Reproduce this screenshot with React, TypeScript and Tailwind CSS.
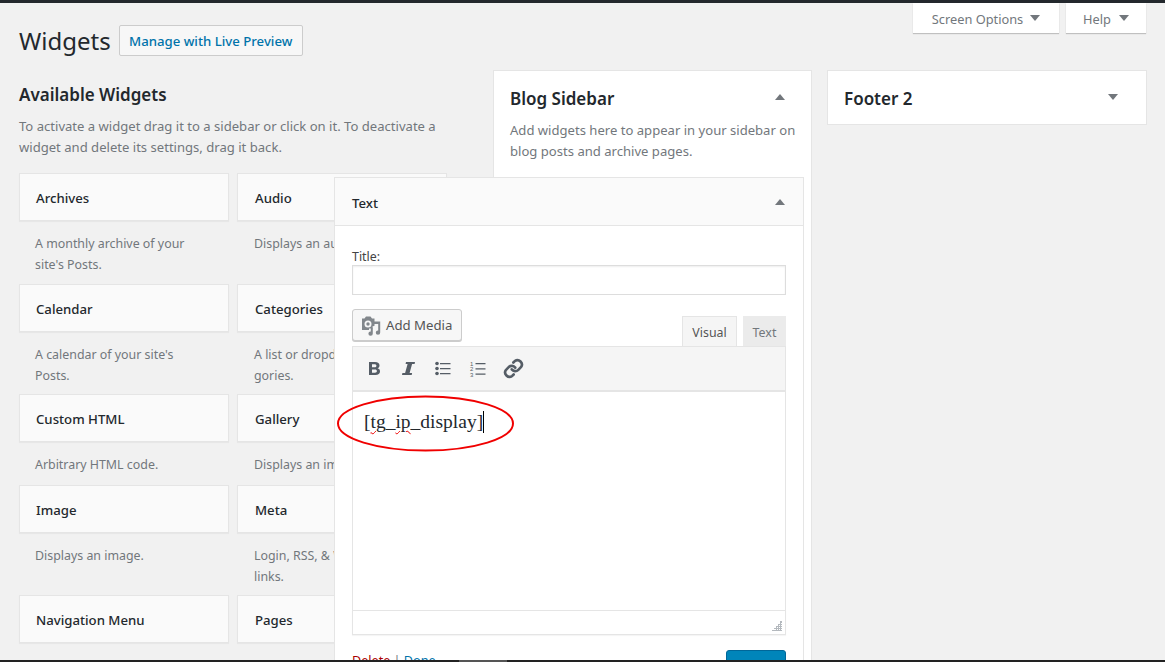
const font = "font-['Noto_Sans',sans-serif]";

const widgets = [
  { name: "Archives", desc: "A monthly archive of your site's Posts.", h: "h-[111px]" },
  { name: "Audio", desc: "Displays an audio player.", h: "h-[111px]" },
  { name: "Calendar", desc: "A calendar of your site's Posts.", h: "h-[110px]" },
  { name: "Categories", desc: "A list or dropdown of cate-gories.", h: "h-[110px]" },
  { name: "Custom HTML", desc: "Arbitrary HTML code.", h: "h-[91px]" },
  { name: "Gallery", desc: "Displays an image gallery.", h: "h-[91px]" },
  { name: "Image", desc: "Displays an image.", h: "h-[110px]" },
  { name: "Meta", desc: "Login, RSS, & WordPress.org links.", h: "h-[110px]" },
  { name: "Navigation Menu", desc: "", h: "h-[66px]" },
  { name: "Pages", desc: "", h: "h-[66px]" },
];

function Arrow({ up, className }: { up?: boolean; className?: string }) {
  return (
    <svg width="10" height="6" viewBox="0 0 10 6" className={`shrink-0 ${className ?? ""}`}>
      <path d={up ? "M0 6 L5 0 L10 6 Z" : "M0 0 L10 0 L5 6 Z"} fill="#72777c" />
    </svg>
  );
}

function WidgetCard({ name, desc, h }: { name: string; desc: string; h: string }) {
  return (
    <div className={`group ${h}`}>
      <div className="h-[48px] flex items-center pl-[16px] group-even:pl-[17px] pt-[4px] bg-[#fafafa] border border-[#e5e5e5] shadow-[0_1px_1px_rgba(0,0,0,0.04)] text-[13.2px] font-medium text-[#23282d]">
        {name}
      </div>
      <p className="mt-[12px] pl-[16px] group-even:pl-[17px] max-w-[182px] group-even:max-w-[184px] text-[12.4px] leading-[21px] text-[#72777c]">{desc}</p>
    </div>
  );
}

function MediaIcon() {
  return (
    <svg width="20" height="20" viewBox="0 0 20 20" fill="#82878c">
      <path
        fillRule="evenodd"
        d="M1 2.500h2.500L5 .5h4.500l1.500 2h2.500v7.300l-2 .6v2.100H8v1.500H1zM7 4.500a3.500 3.500 0 1 0 0 7 3.500 3.500 0 0 0 0-7z"
      />
      <circle cx="7" cy="8" r="1.700" />
      <path d="M13 5.500h6.200v11a2.200 2.200 0 1 1-2-2.100V8h-4.200z" />
      <path d="M11.800 11.500v6a2.200 2.200 0 1 1-2-2.100v-3.900z" />
    </svg>
  );
}

function Toolbar() {
  return (
    <div className="h-[45px] flex items-center pl-[13px] gap-[17px] bg-[#f5f5f5] border-b-2 border-[#e5e5e5]">
      <svg width="17" height="17" viewBox="0 0 17 17" fill="#555d66">
        <path d="M3 2h6c3 0 4.500 1.300 4.500 3.500 0 1.400-.8 2.400-2 2.800 1.600.4 2.500 1.500 2.500 3.200 0 2.300-1.700 3.500-4.500 3.500H3V2zm3 2.300v3h2.500c1.200 0 1.900-.5 1.900-1.500S9.700 4.300 8.500 4.300H6zm0 5.200v3.200h3c1.200 0 1.900-.6 1.900-1.600S10.200 9.500 9 9.500H6z" />
      </svg>
      <svg width="17" height="17" viewBox="0 0 17 17" fill="#555d66">
        <path d="M6 2h9l-.4 2h-2.500l-2.500 9h2.500l-.4 2H2l.4-2h2.700l2.500-9H5.600z" />
      </svg>
      <svg width="18" height="17" viewBox="0 0 18 17" fill="#555d66">
        <circle cx="3" cy="3.500" r="1.800" />
        <circle cx="3" cy="8.500" r="1.800" />
        <circle cx="3" cy="13.500" r="1.800" />
        <path d="M6 3h10.500v1.200H6zM6 8h10.500v1.200H6zM6 13h10.500v1.200H6z" />
      </svg>
      <svg width="18" height="17" viewBox="0 0 18 17" fill="#555d66">
        <path d="M6.500 3h10v1.200h-10zM6.500 8.300h10v1.200h-10zM6.500 13.500h10v1.200h-10z" />
        <text x="1" y="5.500" fontSize="6" fontFamily="Liberation Sans">1</text>
        <text x="1" y="11" fontSize="6" fontFamily="Liberation Sans">2</text>
        <text x="1" y="16.500" fontSize="6" fontFamily="Liberation Sans">3</text>
      </svg>
      <svg width="21" height="21" viewBox="0 0 24 24" fill="none" stroke="#555d66" strokeWidth="3" strokeLinecap="round" strokeLinejoin="round" className="-ml-[1px]">
        <path d="M10 13a5 5 0 0 0 7.500.5l3-3a5 5 0 0 0-7-7l-1.700 1.700" />
        <path d="M14 11a5 5 0 0 0-7.500-.5l-3 3a5 5 0 0 0 7 7l1.700-1.700" />
      </svg>
    </div>
  );
}

function TextWidgetPopup() {
  return (
    <div className="absolute left-[334px] top-[177px] w-[470px] h-[500px] bg-white border border-[#e5e5e5]">
      <div className="h-[48px] flex items-center justify-between pl-[17px] pr-[18px] pt-[4px] bg-[#fafafa] border-b border-[#e5e5e5] text-[13.2px] font-medium text-[#23282d]">
        Text
        <Arrow up className="mb-[4px]" />
      </div>
      <div className="px-[17px] pt-[22px]">
        <label className="block text-[12.4px] leading-[18px] text-[#444]">Title:</label>
        <div className="-mt-[1px] h-[30px] border border-[#ddd] bg-white shadow-[inset_0_1px_2px_rgba(0,0,0,0.07)]" />
        <div className="mt-[14px] flex items-end justify-between h-[37px]">
          <div className="self-start h-[32px] w-[110px] pt-[1px] flex items-center gap-[5px] pl-[8px] bg-[#f7f7f7] border border-[#ccc] rounded-[3px] shadow-[0_1px_0_#ccc] text-[13.2px] text-[#555]">
            <MediaIcon />
            Add Media
          </div>
          <div className="flex gap-[6px] text-[12.4px] text-[#555]">
            <div className="h-[30px] w-[55px] pt-[3px] flex items-center justify-center bg-[#f5f5f5] border border-b-0 border-[#e5e5e5]">Visual</div>
            <div className="h-[30px] w-[43px] pt-[3px] flex items-center justify-center bg-[#ebebeb] border border-b-0 border-[#ebebeb] text-[#72777c]">Text</div>
          </div>
        </div>
        <div className="h-[264px] border-x border-t border-[#e5e5e5]">
          <Toolbar />
          <div className="pl-[11px] pt-[18px] font-['Liberation_Serif',serif] text-[19.5px] leading-[24px] text-[#23282d]">
            [<span className="underline decoration-wavy decoration-[#e00] decoration-1 underline-offset-2">tg</span>_<span className="underline decoration-wavy decoration-[#e00] decoration-1 underline-offset-2">ip</span>_display]<span className="inline-block w-px h-[22px] align-[-5px] bg-black" />
          </div>
        </div>
        <div className="relative h-[25px] border border-[#e5e5e5] shadow-[0_1px_1px_rgba(0,0,0,0.04)]">
          <svg width="10" height="10" viewBox="0 0 10 10" className="absolute right-[3px] bottom-[3px]" fill="#b4b9be">
            <path d="M8 0h2v2H8zM6 3h4v1H6zM4 5h6v1H4zM2 7h8v1H2zM0 9h10v1H0z" />
            <path d="M8 2h1v8H8zM6 4h1v6H6zM4 6h1v4H4z" />
          </svg>
        </div>
        <div className="mt-[15px] flex justify-between">
          <div className="text-[12.6px] leading-[22px]">
            <span className="text-[#a00]">Delete</span>
            <span className="text-[#72777c]"> | </span>
            <span className="text-[#0073aa]">Done</span>
          </div>
          <div className="w-[60px] h-[30px] bg-[#0085ba] border border-[#006799] rounded-[3px]" />
        </div>
      </div>
      {/* red circle drawn on the screenshot */}
      <svg width="180" height="60" viewBox="0 0 180 60" className="absolute left-[1px] top-[216px]" fill="none">
        <ellipse cx="89.500" cy="29.500" rx="87.500" ry="27" stroke="#f00000" strokeWidth="2" />
      </svg>
    </div>
  );
}

export default function App() {
  return (
    <div className={`relative w-[1165px] h-[662px] overflow-hidden bg-[#f1f1f1] ${font}`}>
      <div className="h-[3px] bg-[#23282d]" />

      <div className="flex justify-end gap-[7px] pr-[19px]">
        <div className="h-[30px] w-[146px] pt-[3px] flex items-center justify-center gap-[7px] bg-white shadow-[0_1px_1px_rgba(0,0,0,0.2)] text-[12.8px] text-[#72777c]">
          Screen Options <Arrow className="mb-[4px]" />
        </div>
        <div className="h-[30px] w-[80px] pt-[3px] flex items-center justify-center gap-[8px] bg-white shadow-[0_1px_1px_rgba(0,0,0,0.2)] text-[12.8px] text-[#72777c]">
          Help <Arrow className="mb-[4px]" />
        </div>
      </div>

      <div className="flex pl-[19px] pr-[19px]">
        <div className="w-[428px] shrink-0">
          <div className="flex items-center -mt-[8px] h-[31px]">
            <h1 className="text-[24px] text-[#23282d] leading-[31px]">Widgets</h1>
            <div className="ml-[8px] h-[31px] w-[184px] pt-[3px] flex items-center justify-center bg-[#f7f7f7] border border-[#ccc] rounded-[2px] text-[13.2px] font-medium text-[#0073aa]">
              Manage with Live Preview
            </div>
          </div>
          <h2 className="mt-[26px] text-[17px] leading-[26px] font-semibold text-[#23282d]">Available Widgets</h2>
          <p className="mt-[8px] text-[13.08px] leading-[21px] text-[#72777c]">
            To activate a widget drag it to a sidebar or click on it. To deactivate a widget and delete its settings, drag it back.
          </p>
          <div className="mt-[15px] grid grid-cols-2 gap-x-[8px]">
            {widgets.map((w) => (
              <WidgetCard key={w.name} {...w} />
            ))}
          </div>
        </div>

        <div className="flex gap-[15px] ml-[46px] mt-[37px]">
          <div className="w-[319px] h-[640px] bg-white border border-[#e5e5e5] pl-[16px] pr-[12px]">
            <div className="h-[56px] -mb-[7px] flex items-center justify-between pr-[14px]">
              <h3 className="text-[17px] font-semibold text-[#23282d]">Blog Sidebar</h3>
              <Arrow up className="mb-[4px]" />
            </div>
            <p className="text-[13.08px] leading-[21px] text-[#72777c]">
              Add widgets here to appear in your sidebar on blog posts and archive pages.
            </p>
          </div>
          <div className="w-[320px] h-[55px] pt-[3px] bg-white border border-[#e5e5e5] pl-[16px] pr-[28px] flex items-center justify-between">
            <h3 className="text-[17px] font-semibold text-[#23282d]">Footer 2</h3>
            <Arrow className="mb-[4px]" />
          </div>
        </div>
      </div>

      <TextWidgetPopup />

      <div className="absolute left-0 bottom-0 w-full h-[2px] bg-[#222]">
        <div className="ml-[459px] w-[48px] h-full bg-[#555]" />
      </div>
    </div>
  );
}
